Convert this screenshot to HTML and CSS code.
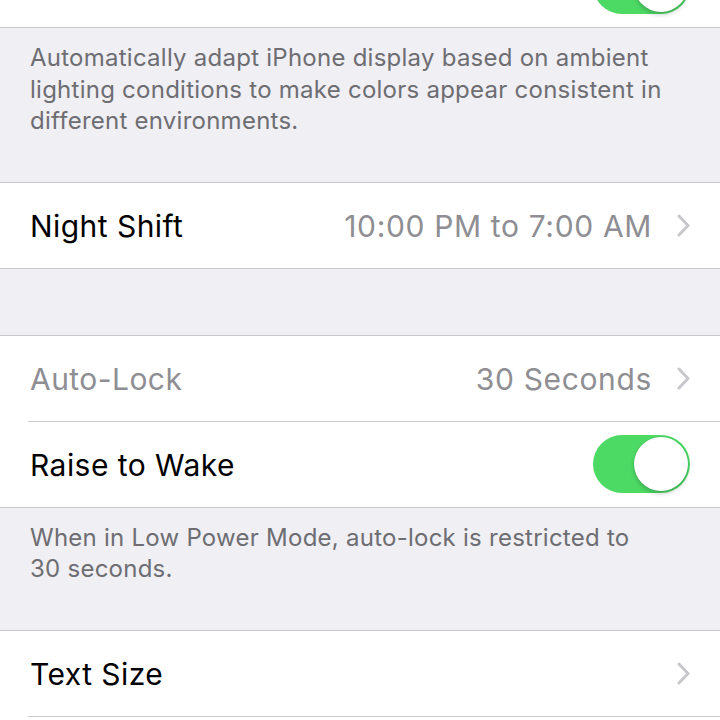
FILE: index.html
```html
<!DOCTYPE html>
<html lang="en">
<head>
  <meta charset="UTF-8" />
  <title>Display &amp; Brightness</title>
  <meta name="viewport" content="width=device-width, initial-scale=1.0" />
  <link rel="stylesheet" href="styles.css">
</head>
<body>
  <div class="screen">
    <div class="group">
      <div class="cell">
        <span class="label">True Tone</span>
        <span class="switch on"><span class="knob"></span></span>
      </div>
    </div>
    <p class="footer">Automatically adapt iPhone display based on ambient lighting conditions to make colors appear consistent in different environments.</p>

    <div class="group">
      <div class="cell">
        <span class="label">Night Shift</span>
        <span class="value">10:00 PM to 7:00 AM</span>
        <svg class="chevron" width="13" height="23" viewBox="0 0 13 23"><polyline points="2,2 11,11.5 2,21" /></svg>
      </div>
    </div>

    <div class="group spaced">
      <div class="cell">
        <span class="label disabled">Auto-Lock</span>
        <span class="value">30 Seconds</span>
        <svg class="chevron" width="13" height="23" viewBox="0 0 13 23"><polyline points="2,2 11,11.5 2,21" /></svg>
      </div>
      <div class="cell">
        <span class="label">Raise to Wake</span>
        <span class="switch on"><span class="knob"></span></span>
      </div>
    </div>
    <p class="footer">When in Low Power Mode, auto-lock is restricted to 30 seconds.</p>

    <div class="group">
      <div class="cell">
        <span class="label">Text Size</span>
        <svg class="chevron" width="13" height="23" viewBox="0 0 13 23"><polyline points="2,2 11,11.5 2,21" /></svg>
      </div>
      <div class="cell">
        <span class="label">Bold Text</span>
        <span class="switch"><span class="knob"></span></span>
      </div>
    </div>
  </div>
</body>
</html>
```

FILE: styles.css
```css
body { margin: 0; background: #efeff4; font-family: Inter, "Noto Sans", sans-serif; overflow: hidden; }
.screen { margin-top: -59px; }

.group { background: #fff; border-top: 1px solid #c8c7cc; border-bottom: 1px solid #c8c7cc; }
.group.spaced { margin-top: 66px; }

.cell {
  display: flex; align-items: center; height: 85px;
  margin-left: 28px; padding: 0 30px 0 2px;
  border-bottom: 1px solid #c8c7cc;
}
.cell:last-child { border-bottom: none; }

.label { flex: 1; font-size: 30px; color: #000; letter-spacing: 0.45px; padding-top: 2px; }
.label.disabled { color: #8e8e93; }
.value { font-size: 30px; color: #8e8e93; margin-right: 25px; letter-spacing: 0.65px; padding-top: 2px; }

.chevron { display: block; }
.chevron polyline { fill: none; stroke: #c7c7cc; stroke-width: 3; stroke-linecap: round; stroke-linejoin: round; }

.switch {
  display: flex; align-items: center; justify-content: flex-start;
  width: 97px; height: 58px; box-sizing: border-box; padding: 2px;
  border-radius: 29px; background: #fff; box-shadow: inset 0 0 0 2px #e5e5ea;
}
.switch.on { background: #4cd964; box-shadow: none; justify-content: flex-end; }
.knob {
  width: 54px; height: 54px; border-radius: 50%; background: #fff;
  box-shadow: 0 3px 4px rgba(0,0,0,0.18), 0 0 0 0.5px rgba(0,0,0,0.08);
}

.footer {
  margin: 0; padding: 14px 56px 45px 30px;
  font-size: 24px; line-height: 31.5px; color: #6d6d72; letter-spacing: 0.25px;
}
```
